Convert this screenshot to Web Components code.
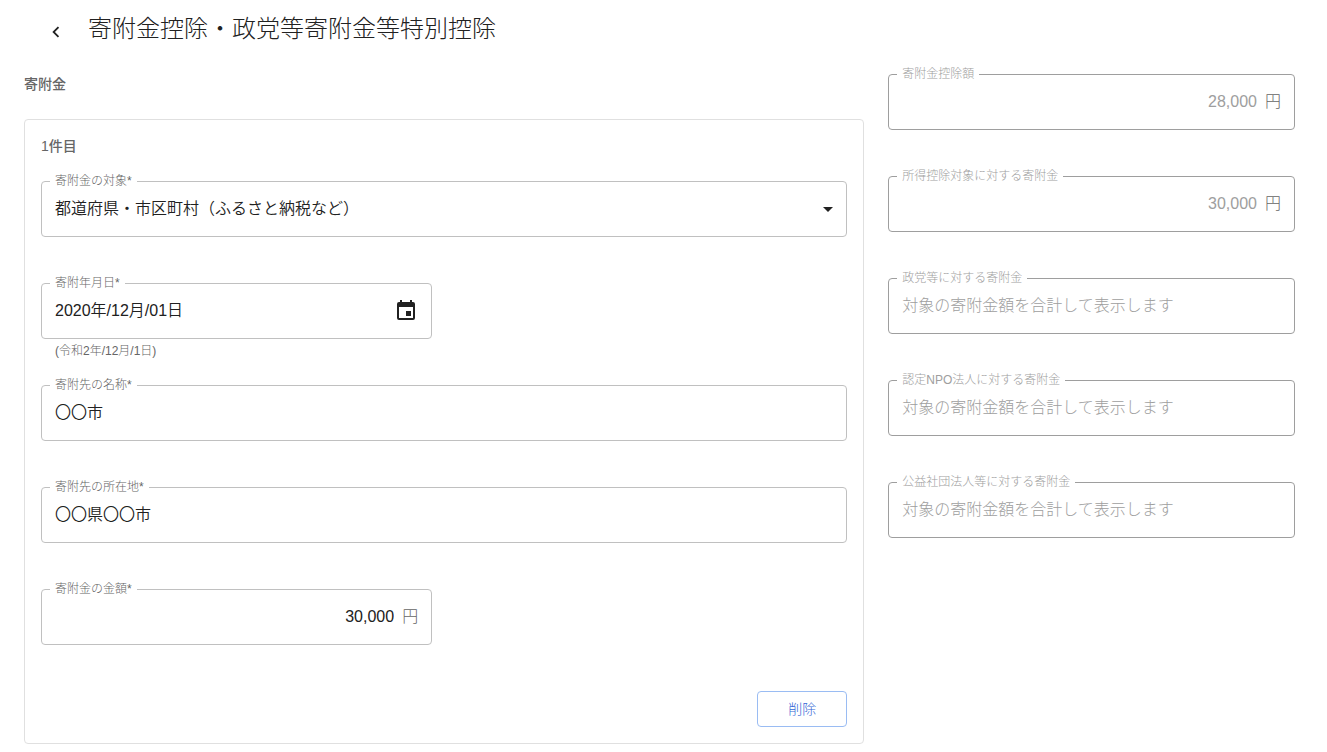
<!DOCTYPE html>
<html lang="ja">
<head>
<meta charset="utf-8">
<meta name="viewport" content="width=device-width, initial-scale=1">
<title>寄附金控除・政党等寄附金等特別控除</title>
<style>
body {
  margin: 0;
  background: #fff;
  color: #212121;
  font-family: "Liberation Sans", "Noto Sans CJK JP", sans-serif;
  font-size: 16px;
  font-weight: 300;
  --border: #c0c0c0;
  --muted: #666;
}
</style>
</head>
<body>
<deduction-page>
  <page-header slot="header">寄附金控除・政党等寄附金等特別控除</page-header>
  <section-heading slot="main">寄附金</section-heading>
  <donation-card slot="main">
    <section-heading slot="title">1件目</section-heading>
    <select-field label="寄附金の対象*" value="都道府県・市区町村（ふるさと納税など）"></select-field>
    <text-field class="half" label="寄附年月日*" value="2020年/12月/01日" helper="(令和2年/12月/1日)" calendar></text-field>
    <text-field label="寄附先の名称*" value="〇〇市"></text-field>
    <text-field label="寄附先の所在地*" value="〇〇県〇〇市"></text-field>
    <text-field class="half" label="寄附金の金額*" value="30,000" unit="円"></text-field>
    <outline-button slot="actions">削除</outline-button>
  </donation-card>
  <text-field slot="aside" label="寄附金控除額" value="28,000" unit="円" disabled></text-field>
  <text-field slot="aside" label="所得控除対象に対する寄附金" value="30,000" unit="円" disabled></text-field>
  <text-field slot="aside" label="政党等に対する寄附金" placeholder="対象の寄附金額を合計して表示します" disabled></text-field>
  <text-field slot="aside" label="認定NPO法人に対する寄附金" placeholder="対象の寄附金額を合計して表示します" disabled></text-field>
  <text-field slot="aside" label="公益社団法人等に対する寄附金" placeholder="対象の寄附金額を合計して表示します" disabled></text-field>
</deduction-page>

<script>
const fieldStyles = `
  :host { display: block; padding-bottom: 46px; }
  .box {
    position: relative;
    box-sizing: border-box;
    height: 56px;
    padding: 0 13px;
    display: flex;
    align-items: center;
    gap: 8px;
    border: 1px solid var(--border);
    border-radius: 4px;
    line-height: 24px;
  }
  label {
    position: absolute;
    left: 8px;
    top: -10px;
    padding: 0 5px;
    background: #fff;
    color: var(--muted);
    font-size: 12px;
    line-height: 18px;
    white-space: nowrap;
  }
  input, select {
    box-sizing: border-box;
    flex: 1;
    min-width: 0;
    height: 54px;
    margin: 0;
    padding: 0;
    border: 0;
    outline: 0;
    background: none;
    appearance: none;
    font: inherit;
    font-weight: 350;
    line-height: 24px;
    color: inherit;
    opacity: 1;
  }
  svg { display: block; fill: currentColor; }
`;

class BaseElement extends HTMLElement {
  constructor() {
    super();
    this.attachShadow({ mode: "open" });
  }
  connectedCallback() {
    this.shadowRoot.innerHTML = this.render();
  }
  attr(name) {
    return this.getAttribute(name) || "";
  }
}

customElements.define("deduction-page", class extends BaseElement {
  render() {
    return `
      <style>
        :host { display: block; }
        .content {
          display: grid;
          grid-template-columns: minmax(0, 1fr) 32%;
          column-gap: 24px;
          align-items: start;
          padding: 18px 32px 8px 24px;
        }
        main { display: grid; gap: 24px; }
        @media (max-width: 700px) {
          .content { grid-template-columns: minmax(0, 1fr); }
          aside { padding-top: 32px; }
        }
      </style>
      <slot name="header"></slot>
      <div class="content">
        <main><slot name="main"></slot></main>
        <aside><slot name="aside"></slot></aside>
      </div>`;
  }
});

customElements.define("page-header", class extends BaseElement {
  render() {
    return `
      <style>
        :host { display: block; }
        header { display: flex; align-items: flex-start; gap: 8px; padding: 8px 32px 0; }
        button {
          display: grid;
          place-items: center;
          flex: none;
          width: 48px;
          height: 48px;
          padding: 0;
          border: 0;
          border-radius: 50%;
          background: none;
          color: inherit;
          cursor: pointer;
        }
        svg { display: block; fill: currentColor; }
        h1 { margin: 0; padding-top: 5px; font-size: 24px; font-weight: 300; line-height: 32px; }
      </style>
      <header>
        <button type="button" aria-label="戻る">
          <svg width="22" height="22" viewBox="0 0 24 24" aria-hidden="true"><path d="M15.41 7.41 14 6l-6 6 6 6 1.41-1.41L10.83 12z"/></svg>
        </button>
        <h1><slot></slot></h1>
      </header>`;
  }
});

customElements.define("section-heading", class extends BaseElement {
  render() {
    return `
      <style>
        :host { display: block; }
        h2 { margin: 0; color: var(--muted); font-size: 14px; font-weight: 500; line-height: 21px; }
      </style>
      <h2><slot></slot></h2>`;
  }
});

customElements.define("donation-card", class extends BaseElement {
  render() {
    return `
      <style>
        :host { display: block; }
        section { padding: 16px; border: 1px solid #e0e0e0; border-radius: 4px; }
        .fields { display: grid; grid-template-columns: 1fr 1fr; column-gap: 24px; padding-top: 24px; }
        ::slotted(*) { grid-column: 1 / -1; }
        ::slotted(.half) { grid-column: 1; }
        .actions { display: flex; justify-content: flex-end; }
      </style>
      <section>
        <slot name="title"></slot>
        <div class="fields"><slot></slot></div>
        <div class="actions"><slot name="actions"></slot></div>
      </section>`;
  }
});

customElements.define("select-field", class extends BaseElement {
  render() {
    return `
      <style>
        ${fieldStyles}
        svg { position: absolute; right: 6px; pointer-events: none; }
      </style>
      <div class="box">
        <label for="control">${this.attr("label")}</label>
        <select id="control"><option selected>${this.attr("value")}</option></select>
        <svg width="24" height="24" viewBox="0 0 24 24" aria-hidden="true"><path d="M7 10l5 5 5-5z"/></svg>
      </div>`;
  }
});

customElements.define("text-field", class extends BaseElement {
  render() {
    const unit = this.attr("unit");
    const calendar = this.hasAttribute("calendar");
    const helper = this.attr("helper");
    return `
      <style>
        ${fieldStyles}
        input { padding-bottom: 4px; }
        :host([disabled]) { --border: #9e9e9e; }
        :host([disabled]) input { padding-bottom: 0; font-weight: 300; }
        :host([disabled]) input, :host([disabled]) label { color: #9e9e9e; }
        :host([unit]) input { padding-bottom: 0; text-align: right; }
        :host([helper]) { padding-bottom: 22px; }
        input::placeholder { color: #9e9e9e; opacity: 1; }
        .unit { color: var(--muted); }
        button { padding: 0 0 2px; border: 0; background: none; color: inherit; cursor: pointer; }
        p { margin: 2px 14px; color: var(--muted); font-size: 12px; line-height: 20px; height: 20px; }
      </style>
      <div class="box">
        <label for="control">${this.attr("label")}</label>
        <input id="control" type="text" value="${this.attr("value")}" placeholder="${this.attr("placeholder")}"
          ${helper ? 'aria-describedby="helper"' : ""} ${this.hasAttribute("disabled") ? "disabled" : ""}>
        ${unit ? `<span class="unit">${unit}</span>` : ""}
        ${calendar ? `<button type="button" aria-label="日付を選択">
          <svg width="24" height="24" viewBox="0 0 24 24" aria-hidden="true"><path fill-rule="evenodd" d="M6 2h2v2h8V2h2v2h1a2 2 0 0 1 2 2v14a2 2 0 0 1-2 2H5a2 2 0 0 1-2-2V6a2 2 0 0 1 2-2h1zM5 9v11h14V9zM12 13h5v5h-5z"/></svg>
        </button>` : ""}
      </div>
      ${helper ? `<p id="helper">${helper}</p>` : ""}`;
  }
});

customElements.define("outline-button", class extends BaseElement {
  render() {
    return `
      <style>
        :host { display: block; }
        button {
          display: block;
          min-width: 90px;
          height: 36px;
          padding: 0 16px 2px;
          border: 1px solid #9abcf3;
          border-radius: 4px;
          background: none;
          color: #3367d6;
          font: inherit;
          font-size: 14px;
          cursor: pointer;
        }
      </style>
      <button type="button"><slot></slot></button>`;
  }
});
</script>
</body>
</html>
